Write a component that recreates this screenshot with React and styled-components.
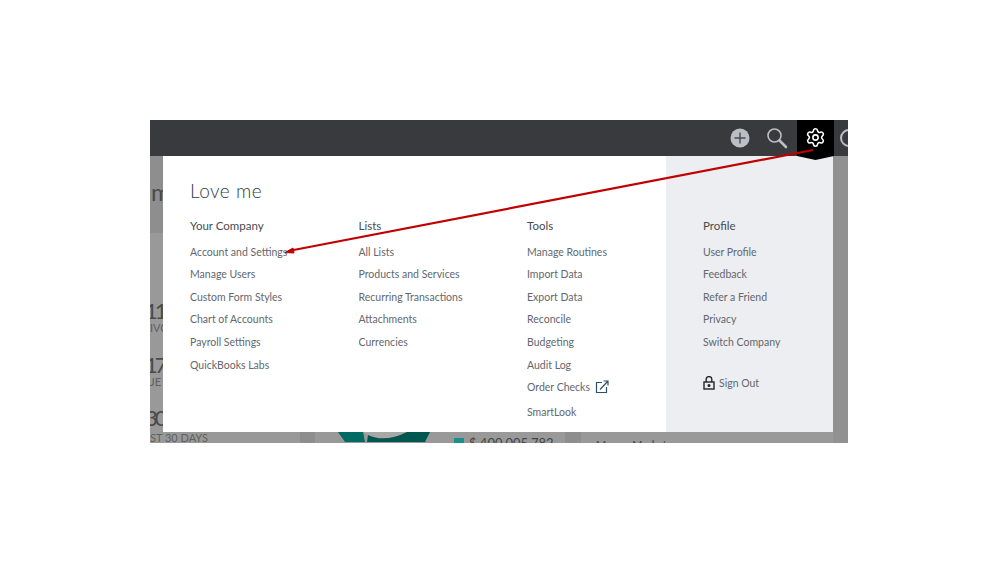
import React from "react";
import styled, { createGlobalStyle } from "styled-components";
import { Settings } from "lucide-react";

const GlobalStyle = createGlobalStyle`
  html, body {
    margin: 0;
    background: #ffffff;
    font-family: Lato, "Open Sans", sans-serif;
  }
`;

const Page = styled.div`
  width: 999px;
  height: 562px;
  padding: 120px 0 0 150px;
  box-sizing: border-box;
  overflow: hidden;
`;

const Frame = styled.div`
  position: relative;
  width: 698px;
  height: 323px;
  overflow: hidden;
  background: #999999;
`;

const TopBar = styled.div`
  height: 36px;
  background: #393a3d;
  display: flex;
  align-items: center;
  justify-content: flex-end;
  padding-right: 60px;
  gap: 16px;
`;

const GearTab = styled.div`
  position: absolute;
  left: 647px;
  top: 0;
  width: 37px;
  height: 40px;
  background: #000000;
  clip-path: polygon(0 0, 100% 0, 100% 90%, 50% 100%, 0 90%);
  display: flex;
  justify-content: center;
  padding-top: 7px;
  box-sizing: border-box;
  color: #ffffff;
  z-index: 2;
`;

const HelpGlyph = styled.div`
  position: absolute;
  left: 690px;
  top: 9px;
  width: 18px;
  height: 18px;
  border: 2px solid #babec5;
  border-radius: 50%;
  box-sizing: border-box;
`;

const RightRail = styled.div`
  position: absolute;
  left: 683px;
  top: 36px;
  width: 15px;
  height: 287px;
  background: #919191;
`;

const Backdrop = styled.div`
  height: 287px;
  display: flex;
  flex-direction: column;
  color: #4a4a4a;
`;

const HeaderBand = styled.div`
  height: 77px;
  background: #8e8e8e;
  font-size: 24px;
  line-height: 72px;
  padding-left: 1px;
  box-sizing: border-box;
`;

const Stats = styled.div`
  height: 199px;
  padding-top: 68px;
  box-sizing: border-box;
  display: flex;
  flex-direction: column;
  gap: 22.5px;
  overflow: hidden;
`;

const Stat = styled.div`
  display: flex;
  flex-direction: column;
`;

const StatValue = styled.div`
  font-size: 22px;
  line-height: 19px;
  letter-spacing: -3px;
  text-indent: -5px;
`;

const StatLabel = styled.div`
  font-size: 11px;
  line-height: 9px;
  margin-top: 3px;
  color: #606060;
`;

const BottomStrip = styled.div`
  height: 11px;
  display: flex;
  align-items: flex-start;
  font-size: 11px;
  line-height: 11px;
  color: #606060;
  overflow: hidden;
`;

const StripLabel = styled.div`
  width: 150px;
`;

const Band = styled.div`
  width: ${(p) => p.$width}px;
  height: 11px;
  background: #8e8e8e;
  margin-right: ${(p) => p.$after}px;
`;

const Donut = styled.svg`
  width: 98px;
  height: 11px;
  margin-right: 21px;
`;

const Swatch = styled.div`
  width: 10px;
  height: 5px;
  margin-top: 6px;
  margin-right: 5px;
  background: #1b8f8f;
`;

const Amount = styled.div`
  width: 96px;
  font-size: 13px;
  line-height: 13px;
  margin-top: 5px;
  color: #454545;
`;

const Market = styled.div`
  margin-top: 7px;
  margin-left: -1px;
  font-size: 11px;
  color: #454545;
`;

const Menu = styled.div`
  position: absolute;
  left: 13px;
  top: 36px;
  width: 670px;
  height: 276px;
  background: #ffffff;
  display: flex;
  color: #393a3d;
`;

const MenuMain = styled.div`
  width: 503px;
  padding: 24px 0 0 27px;
  box-sizing: border-box;
`;

const CompanyName = styled.div`
  font-size: 19px;
  line-height: 22px;
  letter-spacing: 0.5px;
  font-weight: 300;
  color: #2f3a4a;
  margin-bottom: 15px;
`;

const Columns = styled.div`
  display: flex;
`;

const Column = styled.div`
  width: ${(p) => p.$width}px;
`;

const SidePanel = styled.div`
  width: 167px;
  background: #eceef1;
  padding: 61px 0 0 37px;
  box-sizing: border-box;
`;

const ColumnTitle = styled.div`
  font-size: 11.5px;
  line-height: 18px;
  color: #4a4c50;
  margin-bottom: 7.5px;
`;

const MenuLink = styled.div`
  display: flex;
  align-items: center;
  gap: 5px;
  font-size: 10.5px;
  line-height: 18px;
  height: 18px;
  margin-bottom: ${(p) => p.$gap ?? 4.65}px;
  color: #63676e;
  white-space: nowrap;
`;

const SignOut = styled(MenuLink)`
  margin-top: 23px;
  gap: 4px;
`;

const Arrow = styled.svg`
  position: absolute;
  left: 0;
  top: 0;
  width: 698px;
  height: 323px;
  z-index: 3;
  pointer-events: none;
`;

const PlusIcon = () => (
  <svg width="20" height="20" viewBox="0 0 20 20">
    <circle cx="10" cy="10" r="9.5" fill="#babec5" />
    <path d="M10 4.5v11M4.5 10h11" stroke="#4a4c50" strokeWidth="1.4" />
  </svg>
);

const SearchIcon = () => (
  <svg width="22" height="22" viewBox="0 0 22 22" fill="none" stroke="#babec5">
    <circle cx="8.5" cy="8.5" r="6.5" strokeWidth="1.6" />
    <path d="M13.5 13.5L20 20" strokeWidth="2.6" strokeLinecap="round" />
  </svg>
);

const ExternalIcon = () => (
  <svg width="14" height="14" viewBox="0 0 14 14" fill="none" stroke="#2f4f66" strokeWidth="1.2">
    <path d="M7 2.5H1.5v10h10V7" />
    <path d="M5 9.5L13 1M8.5 1H13v4.5" />
  </svg>
);

const LockIcon = () => (
  <svg width="12" height="14" viewBox="0 0 12 14" fill="none" stroke="#22262b" strokeWidth="1.4">
    <path d="M3.2 6V3.2a2.8 2.6 0 0 1 5.6 0V6" />
    <rect x="1" y="6" width="10" height="7" />
    <circle cx="6" cy="9.5" r="0.8" fill="#22262b" />
  </svg>
);

const companyLinks = [
  "Account and Settings",
  "Manage Users",
  "Custom Form Styles",
  "Chart of Accounts",
  "Payroll Settings",
  "QuickBooks Labs",
];
const listLinks = [
  "All Lists",
  "Products and Services",
  "Recurring Transactions",
  "Attachments",
  "Currencies",
];
const toolLinks = [
  "Manage Routines",
  "Import Data",
  "Export Data",
  "Reconcile",
  "Budgeting",
  "Audit Log",
];
const profileLinks = [
  "User Profile",
  "Feedback",
  "Refer a Friend",
  "Privacy",
  "Switch Company",
];

const App = () => {
  return (
    <Page>
      <GlobalStyle />
      <Frame>
        <TopBar>
          <PlusIcon />
          <SearchIcon />
        </TopBar>
        <GearTab>
          <Settings size={21} strokeWidth={1.8} />
        </GearTab>
        <HelpGlyph />
        <Backdrop>
          <HeaderBand>m</HeaderBand>
          <Stats>
            <Stat>
              <StatValue>11</StatValue>
              <StatLabel>IVC</StatLabel>
            </Stat>
            <Stat>
              <StatValue>17</StatValue>
              <StatLabel>JE</StatLabel>
            </Stat>
            <Stat>
              <StatValue>30</StatValue>
            </Stat>
          </Stats>
          <BottomStrip>
            <StripLabel>ST 30 DAYS</StripLabel>
            <Band $width={15} $after={20} />
            <Donut viewBox="0 0 98 11">
              <path d="M28 0Q50 14 72 0Z" fill="#a8a8a8" />
              <path d="M3 0H28L30 10H10Z" fill="#006b62" />
              <path d="M33 3Q50 11 72 0H95L90 10H32Z" fill="#00574f" />
            </Donut>
            <Swatch />
            <Amount>$ 400,005,782</Amount>
            <Band $width={16} $after={16} />
            <Market>Money Market</Market>
          </BottomStrip>
        </Backdrop>
        <RightRail />
        <Menu>
          <MenuMain>
            <CompanyName>Love me</CompanyName>
            <Columns>
              <Column $width={168.5}>
                <ColumnTitle>Your Company</ColumnTitle>
                {companyLinks.map((link) => (
                  <MenuLink key={link}>{link}</MenuLink>
                ))}
              </Column>
              <Column $width={168.5}>
                <ColumnTitle>Lists</ColumnTitle>
                {listLinks.map((link) => (
                  <MenuLink key={link}>{link}</MenuLink>
                ))}
              </Column>
              <Column $width={139}>
                <ColumnTitle>Tools</ColumnTitle>
                {toolLinks.map((link) => (
                  <MenuLink key={link}>{link}</MenuLink>
                ))}
                <MenuLink $gap={6.6}>
                  Order Checks <ExternalIcon />
                </MenuLink>
                <MenuLink>SmartLook</MenuLink>
              </Column>
            </Columns>
          </MenuMain>
          <SidePanel>
            <ColumnTitle>Profile</ColumnTitle>
            {profileLinks.map((link) => (
              <MenuLink key={link}>{link}</MenuLink>
            ))}
            <SignOut>
              <LockIcon /> Sign Out
            </SignOut>
          </SidePanel>
        </Menu>
        <Arrow viewBox="0 0 698 323">
          <path d="M663 30L141 130.5" stroke="#c00000" strokeWidth="2.2" />
          <path d="M135 132.5L143 128L144 133Z" fill="#c00000" stroke="#c00000" />
        </Arrow>
      </Frame>
    </Page>
  );
};

export default App;
